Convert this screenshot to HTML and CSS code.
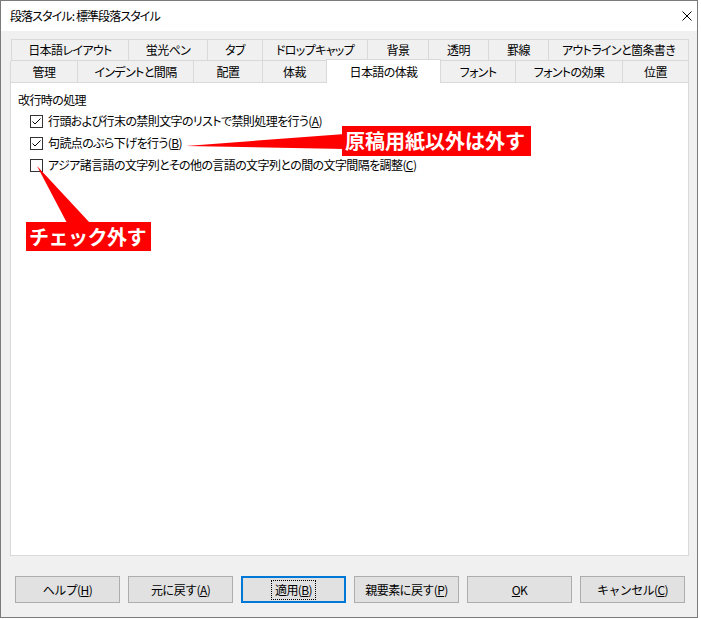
FILE: index.html
```html
<!DOCTYPE html>
<html lang="ja">
<head>
  <meta charset="UTF-8">
  <title>段落スタイル: 標準段落スタイル</title>
  <link rel="stylesheet" href="styles.css">
</head>
<body>

  <div class="window">
    <div class="titlebar">
      <span class="title">段落スタイル: 標準段落スタイル</span>
      <svg class="close" width="10" height="10" viewBox="0 0 10 10">
        <path d="M0.5 0.5 L9.5 9.5 M9.5 0.5 L0.5 9.5" stroke="#000" stroke-width="1" fill="none"/>
      </svg>
    </div>

    <div class="main">
      <!-- tab rows -->
      <div class="tabrow row1">
        <div class="tab">日本語レイアウト</div>
        <div class="tab">蛍光ペン</div>
        <div class="tab">タブ</div>
        <div class="tab">ドロップキャップ</div>
        <div class="tab">背景</div>
        <div class="tab">透明</div>
        <div class="tab">罫線</div>
        <div class="tab">アウトラインと箇条書き</div>
      </div>
      <div class="tabrow row2">
        <div class="tab">管理</div>
        <div class="tab">インデントと間隔</div>
        <div class="tab">配置</div>
        <div class="tab">体裁</div>
        <div class="tab active">日本語の体裁</div>
        <div class="tab">フォント</div>
        <div class="tab">フォントの効果</div>
        <div class="tab">位置</div>
      </div>

      <div class="panel">
        <div class="group-title">改行時の処理</div>
        <label class="check">
          <svg class="box" width="13" height="13" viewBox="0 0 13 13">
            <rect x="0.5" y="0.5" width="12" height="12" fill="#fff" stroke="#333"/>
            <polyline points="2.5,6.5 5,9 10.5,3.5" fill="none" stroke="#000" stroke-width="1"/>
          </svg>
          <span>行頭および行末の禁則文字のリストで禁則処理を行う(<u>A</u>)</span>
        </label>
        <label class="check">
          <svg class="box" width="13" height="13" viewBox="0 0 13 13">
            <rect x="0.5" y="0.5" width="12" height="12" fill="#fff" stroke="#333"/>
            <polyline points="2.5,6.5 5,9 10.5,3.5" fill="none" stroke="#000" stroke-width="1"/>
          </svg>
          <span>句読点のぶら下げを行う(<u>B</u>)</span>
        </label>
        <label class="check">
          <svg class="box" width="13" height="13" viewBox="0 0 13 13">
            <rect x="0.5" y="0.5" width="12" height="12" fill="#fff" stroke="#333"/>
          </svg>
          <span>アジア諸言語の文字列とその他の言語の文字列との間の文字間隔を調整(<u>C</u>)</span>
        </label>
      </div>

      <div class="buttons">
        <button class="btn">ヘルプ(<u>H</u>)</button>
        <button class="btn">元に戻す(<u>A</u>)</button>
        <button class="btn default"><span class="focus">適用(<u>B</u>)</span></button>
        <button class="btn">親要素に戻す(<u>P</u>)</button>
        <button class="btn"><u>O</u>K</button>
        <button class="btn">キャンセル(<u>C</u>)</button>
      </div>
    </div>
  </div>

  <!-- red callouts drawn on top of the screenshot -->
  <svg class="marks" width="701" height="619" viewBox="0 0 701 619">
    <polygon points="186,146 345,134 345,149" fill="#ff0000"/>
    <polygon points="37,166 67,223 90,223" fill="#ff0000"/>
  </svg>
  <div class="note note-a">原稿用紙以外は外す</div>
  <div class="note note-b">チェック外す</div>

</body>
</html>
```

FILE: styles.css
```css
body {
  margin: 0;
  background-color: #ffffff;
  font-family: "Noto Sans CJK JP", "Noto Sans", sans-serif;
  font-size: 12px;
  letter-spacing: -0.6px;
  color: #000;
  font-feature-settings: "palt";
}
.window {
  width: 698px;
  height: 618px;
  box-sizing: border-box;
  border: 1px solid #7a7a7a;
  background-color: #f0f0f0;
}
.titlebar {
  height: 30px;
  background-color: #fff;
  display: flex;
  align-items: center;
  padding-left: 9px;
}
.title {
  font-size: 12px;
  line-height: 16px;
  letter-spacing: -0.9px;
}
.close {
  margin-left: auto;
  margin-right: 5px;
}
.main {
  padding: 8px 8px 0 9px;
}
/* Tabs */
.tabrow {
  display: grid;
  border-left: 1px solid #d9d9d9;
}
.row1 {
  margin-left: 1px;
  height: 22px;
  grid-template-columns: 117px 79px 55px 105px 61px 60px 60px 140px;
}
.row2 {
  height: 21px;
  grid-template-columns: 67px 116px 69px 64px 114px 75px 107px 66px;
}
.tab {
  box-sizing: border-box;
  border-right: 1px solid #d9d9d9;
  background-color: #f0f0f0;
  display: flex;
  align-items: center;
  justify-content: center;
  white-space: nowrap;
  line-height: 16px;
}
.row1 .tab {
  border-top: 1px solid #d9d9d9;
  border-bottom: 1px solid #d9d9d9;
}
.row2 .tab {
  padding-top: 1px;
}
.tab.active {
  position: relative;
  z-index: 1;
  margin: -2px 0 -1px -1px;
  border: 1px solid #d9d9d9;
  border-bottom: none;
  background-color: #fff;
  padding-top: 0;
}
/* Panel */
.panel {
  height: 474px;
  box-sizing: border-box;
  border: 1px solid #d9d9d9;
  background-color: #fff;
  padding: 9px 7px 0 7px;
}
.group-title {
  line-height: 16px;
  margin-bottom: 2px;
}
.check {
  display: flex;
  align-items: center;
  height: 22px;
  margin-left: 12px;
}
.check .box {
  flex: none;
  margin-right: 5px;
}
.check span {
  line-height: 16px;
  white-space: nowrap;
}
/* Buttons */
.buttons {
  display: flex;
  justify-content: space-between;
  margin-top: 20px;
  padding: 0 4px 0 5px;
}
.btn {
  width: 105px;
  height: 27px;
  box-sizing: border-box;
  padding: 0;
  border: 1px solid #adadad;
  background-color: #e1e1e1;
  font-family: inherit;
  font-size: 12px;
  letter-spacing: inherit;
  color: #000;
  line-height: 16px;
}
.btn.default {
  border: 2px solid #0078d7;
}
.focus {
  display: inline-block;
  padding: 1px 3px;
  border: 1px dotted #000;
}
/* Annotations */
.marks {
  position: absolute;
  left: 0;
  top: 0;
  pointer-events: none;
}
.note {
  position: absolute;
  background-color: #ff0000;
  color: #fff;
  font-weight: bold;
  font-size: 20px;
  line-height: 30px;
  letter-spacing: 0;
  white-space: nowrap;
  font-feature-settings: normal;
}
.note-a {
  left: 342px;
  top: 126px;
  width: 189px;
  height: 30px;
  padding-left: 3px;
  box-sizing: border-box;
}
.note-b {
  left: 26px;
  top: 222px;
  width: 125px;
  height: 29px;
  line-height: 29px;
  padding-left: 3px;
  box-sizing: border-box;
  letter-spacing: -0.5px;
}
```
